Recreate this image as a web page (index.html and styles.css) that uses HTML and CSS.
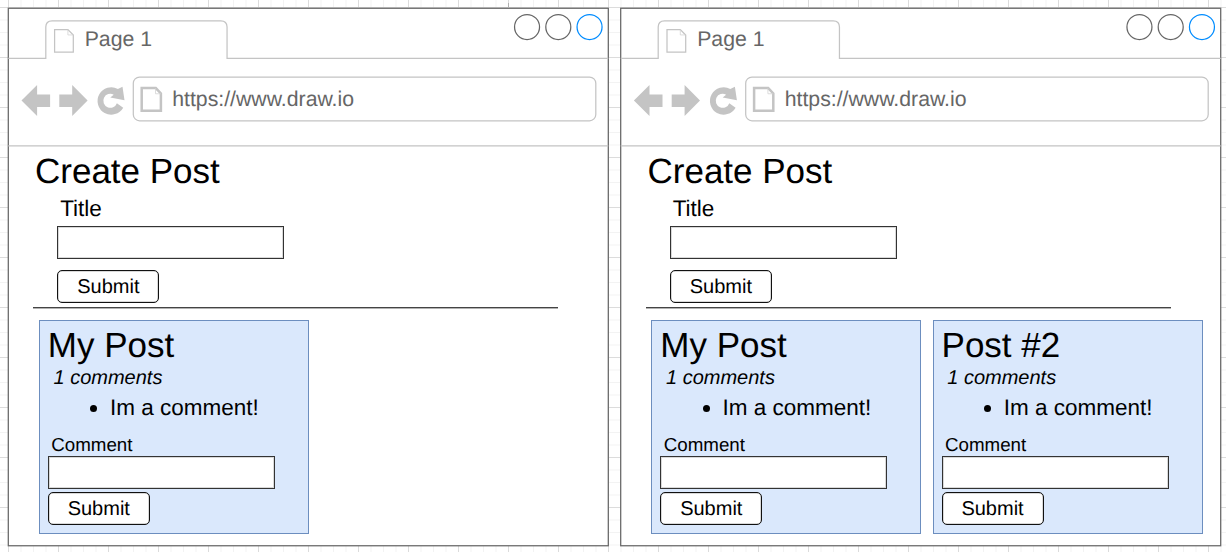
FILE: index.html
```html
<!DOCTYPE html>
<html lang="en">
<head>
<meta charset="utf-8">
<title>Create Post</title>
<link rel="stylesheet" href="styles.css">
</head>
<body>
<svg class="defs" aria-hidden="true">
  <defs>
  <g id="frame">
    <rect class="outline" width="600" height="537.5"/>
    <path class="line" d="M0 50H37.5V18.75Q37.5 12.5 43.75 12.5H212.5Q218.75 12.5 218.75 18.75V50H600M0 137.5H600"/>
    <rect class="line" x="125" y="68.75" width="462.5" height="43.75" rx="6.25"/>
    <circle class="outline" cx="518.75" cy="18.75" r="12.5"/>
    <circle class="outline" cx="550" cy="18.75" r="12.5"/>
    <circle class="accent" cx="581.25" cy="18.75" r="12.5"/>
    <path class="line" d="M46.3 21.3H59.6L65 26.7V43.8H46.3Z"/>
    <path class="fold" d="M59.6 21.3V26.7H65"/>
    <path class="line thick" d="M133.4 79.8H147.5L152.6 85.2V102.5H133.4Z"/>
    <path class="fold" d="M147.2 80V85.5H152.6"/>
    <path class="solid" d="M13.2 92.3L28.8 76.7V86.2H41.8V98.8H28.8V107.8Z"/>
    <path class="solid" d="M79.3 92.3L63.9 76.7V86.2H51V98.8H63.9V107.8Z"/>
    <path class="solid" d="M109.6 80.7L114.2 78.4L116.2 91.9L102 89.3L105.4 86.4A7 7 0 1 0 108.6 94.9L114.9 99.4A13.7 13.7 0 1 1 109.6 80.7Z"/>
  </g>
  </defs>
</svg>
<main class="canvas">
  <i class="tick"></i>
  <section class="window">
    <svg class="frame"><use href="#frame" x="0.3" y="0.25"/></svg>
    <header class="chrome">
      <div class="tab">Page 1</div>
      <div class="address">https://www.draw.io</div>
    </header>
    <div class="create">
      <h1 class="heading">Create Post</h1>
      <div class="form">
        <label class="label">Title</label>
        <div class="input"></div>
        <div class="button">Submit</div>
      </div>
    </div>
    <div class="rule"></div>
    <div class="posts">
      <article class="post">
        <h2 class="heading">My Post</h2>
        <p class="count">1 comments</p>
        <ul class="comments"><li>Im a comment!</li></ul>
        <label class="comment-label">Comment</label>
        <div class="input"></div>
        <div class="button">Submit</div>
      </article>
    </div>
  </section>
  <section class="window">
    <svg class="frame"><use href="#frame" x="-0.3" y="0.25"/></svg>
    <header class="chrome">
      <div class="tab">Page 1</div>
      <div class="address">https://www.draw.io</div>
    </header>
    <div class="create">
      <h1 class="heading">Create Post</h1>
      <div class="form">
        <label class="label">Title</label>
        <div class="input"></div>
        <div class="button">Submit</div>
      </div>
    </div>
    <div class="rule"></div>
    <div class="posts">
      <article class="post">
        <h2 class="heading">My Post</h2>
        <p class="count">1 comments</p>
        <ul class="comments"><li>Im a comment!</li></ul>
        <label class="comment-label">Comment</label>
        <div class="input"></div>
        <div class="button">Submit</div>
      </article>
      <article class="post">
        <h2 class="heading">Post #2</h2>
        <p class="count">1 comments</p>
        <ul class="comments"><li>Im a comment!</li></ul>
        <label class="comment-label">Comment</label>
        <div class="input"></div>
        <div class="button">Submit</div>
      </article>
    </div>
  </section>
</main>
</body>
</html>
```
FILE: styles.css
```css
* { box-sizing: border-box; margin: 0; padding: 0; }
body {
  width: 1226px;
  height: 552px;
  overflow: hidden;
  color: #000;
  font-family: "Liberation Sans", Arial, sans-serif;
  text-rendering: geometricPrecision;
}
.defs { position: absolute; width: 0; height: 0; }
.canvas {
  position: relative;
  isolation: isolate;
  display: flex;
  gap: 12.5px;
  height: 552px;
  padding: 8.2px 0 0 8.2px;
  background-color: #fff;
  background-image:
    linear-gradient(90deg, #dcdcdc 1px, transparent 1px),
    linear-gradient(#dcdcdc 1px, transparent 1px),
    linear-gradient(90deg, #f3f3f3 1px, transparent 1px),
    linear-gradient(#f3f3f3 1px, transparent 1px);
  background-size: 50px 50px, 50px 50px, 12.5px 12.5px, 12.5px 12.5px;
  background-position: 8px 7px;
}
.tick {
  position: absolute;
  left: 508px;
  top: 3px;
  width: 1px;
  height: 4px;
  background: #b0b0b0;
}
.window {
  position: relative;
  flex: none;
  width: 600px;
  height: 537.5px;
}
.frame {
  position: absolute;
  z-index: -1;
  inset: 0;
  width: 600px;
  height: 537.5px;
  overflow: visible;
}
.outline { fill: #fff; stroke: #666; stroke-width: 1.25; }
.accent { fill: #fff; stroke: #008cff; stroke-width: 1.25; }
.line { fill: none; stroke: #c4c4c4; stroke-width: 1.25; }
.thick { stroke-width: 2.5; }
.fold { fill: none; stroke: #d4d4d4; stroke-width: 0.8; }
.solid { fill: #c4c4c4; }
.chrome {
  height: 137.5px;
  padding-top: 12.5px;
  color: #666;
  font-size: 21.25px;
}
.tab { height: 56.25px; padding-left: 76.5px; line-height: 37px; }
.address { height: 43.75px; padding-left: 164px; line-height: 45px; }
.create { height: 162.5px; padding: 6px 0 0 26.8px; }
.heading { font-size: 35px; font-weight: 400; line-height: 40px; }
.form { padding-left: 23px; }
.label {
  display: block;
  height: 34.3px;
  padding-left: 2.2px;
  font-size: 22.5px;
  line-height: 33px;
}
.input {
  width: 227px;
  height: 33px;
  margin: 0 0 11px -0.6px;
  border: 1px solid #333;
  background: #fff;
  box-shadow: inset 0 0 0 1px rgba(0, 0, 0, 0.15);
}
.button {
  width: 102px;
  height: 33px;
  margin-left: -0.6px;
  border: 1px solid #111;
  border-radius: 5px;
  background: #fff;
  box-shadow: inset 0 0 0 0.5px rgba(0, 0, 0, 0.3);
  font-size: 20px;
  line-height: 32px;
  text-align: center;
}
.rule {
  width: 525px;
  height: 1px;
  margin: -1px 0 0 25px;
  background: #444;
  box-shadow: 0 1px rgba(0, 0, 0, 0.3);
}
.posts { display: flex; gap: 11.25px; padding: 12px 0 0 30.8px; }
.post {
  flex: none;
  width: 270px;
  height: 214px;
  padding: 5px 0 0 7.8px;
  border: 1px solid #6c8ebf;
  background: #dae8fc;
}
.count { padding-left: 5.7px; font-size: 20px; font-style: italic; line-height: 24px; }
.comments {
  height: 43px;
  padding-left: 62.3px;
  font-size: 22.5px;
  line-height: 36px;
  list-style: disc;
}
.comment-label {
  display: block;
  height: 23px;
  padding-left: 3.4px;
  font-size: 18.75px;
  line-height: 23px;
}
.post .input { margin: 0 0 3px; }
.post .button { margin-left: 0; }
```
